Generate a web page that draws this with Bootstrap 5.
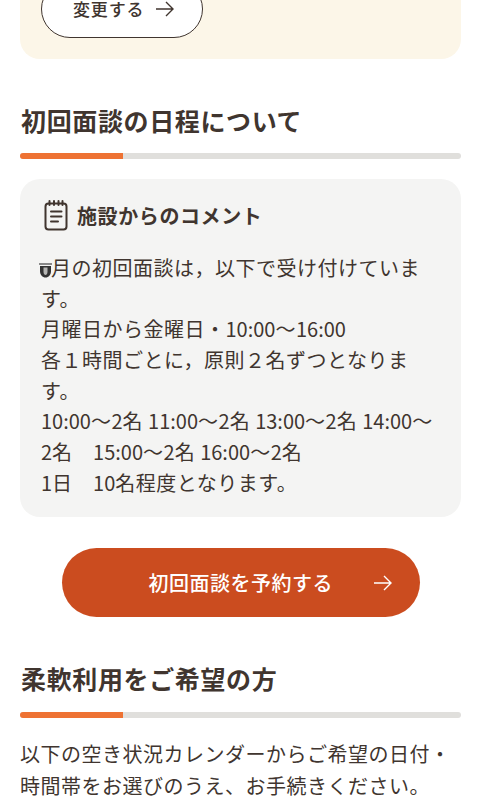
<!DOCTYPE html>
<html lang="ja">
<head>
<meta charset="utf-8">
<title>初回面談</title>
<link href="https://cdn.jsdelivr.net/npm/bootstrap@5.3.0/dist/css/bootstrap.min.css" rel="stylesheet">
<style>
html,body{height:800px;overflow:hidden;background:#fff}
body{font-family:"Noto Sans CJK JP","Noto Sans",sans-serif;color:#40352f;padding:0 20px}
.top-panel{background:#fcf6e8;border-radius:0 0 20px 20px;height:59px;padding:0 21px}
.change-btn{width:162px;height:58px;margin-top:-20px;border:1.5px solid #40352f;border-radius:29px;background:#fff;color:#40352f;font-size:17px;font-weight:500;letter-spacing:.05em;line-height:1;padding:19px 0 0 31px;white-space:nowrap}
.change-btn svg{margin-left:11px;vertical-align:-2px}
.sec-title{font-size:25px;font-weight:700;letter-spacing:.025em;line-height:36px;margin:0;padding-left:1px}
.rule-bar{height:6px;background:#e0dfdc;border-radius:3px;overflow:hidden}
.rule-fill{width:103px;height:6px;background:#ee7233}
.first-title{margin-top:43px}
.rule-gap{margin-top:15px}
.note-box{background:#f4f4f3;border-radius:20px;padding:18px 21px 18px;margin-top:20px;height:338px}
.note-head{font-size:20px;font-weight:700;line-height:34px;gap:9px;letter-spacing:.03em;padding-left:3px}
.note-head span{padding-top:2px}
.note-body{font-size:20px;letter-spacing:.5px;line-height:30.65px;margin:20px 0 0}
.num{letter-spacing:0}
.cta-btn{display:flex;align-items:center;width:358px;height:69px;margin:31px auto 0;border-radius:35px;background:#cb4c1f;color:#fff;font-size:20px;font-weight:500;letter-spacing:.5px;padding:0 27px 0 87px;border:0}
.cta-btn svg{margin-left:auto}
.second-title{margin-top:43px}
.rule-second{margin-top:16px}
.intro{font-size:20px;letter-spacing:.5px;line-height:32px;margin:20px 0 0}
.mark-glyph{display:inline-block;width:13px;height:16px;margin-left:-2px;margin-right:-1px;vertical-align:-2px}
</style>
</head>
<body>
<div class="top-panel d-flex align-items-start">
  <div class="change-btn">変更する<svg width="20" height="18" viewBox="0 0 20 18" fill="none" stroke="#40352f" stroke-width="1.4"><path d="M1 9h17M11 2l7 7-7 7"/></svg></div>
</div>
<h2 class="sec-title first-title">初回面談の日程について</h2>
<div class="rule-bar rule-gap"><div class="rule-fill"></div></div>
<div class="note-box">
  <div class="note-head d-flex align-items-center">
    <svg width="24" height="31" viewBox="0 0 24 31" fill="none" stroke="#40352f" stroke-width="2" stroke-linecap="round"><rect x="1.500" y="3.500" width="21" height="26" rx="3"/><path d="M5.500 1v4M10 1v4M14.500 1v4M18.500 1v4M7 11.500h10.500M7 16.500h10.500M7 21.500h7"/></svg>
    <span>施設からのコメント</span>
  </div>
  <p class="note-body"><svg class="mark-glyph" viewBox="0 0 13 16"><rect y="1" width="13" height="2" fill="#888"/><path d="M1 4h11v5c0 4-2.500 6.500-5.500 6.500S1 13 1 9z" fill="#333"/><path d="M4.500 5.500h4v4c0 2-.8 3.500-2 3.500s-2-1.500-2-3.500z" fill="#b5b5b3"/></svg>月の初回面談は，以下で受け付けています。<br>月曜日から金曜日・<span class="num">10:00</span>～<span class="num">16:00</span><br>各１時間ごとに，原則２名ずつとなります。<br><span class="num">10:00</span>～<span class="num">2</span>名 <span class="num">11:00</span>～<span class="num">2</span>名 <span class="num">13:00</span>～<span class="num">2</span>名 <span class="num">14:00</span>～<span class="num">2</span>名　<span class="num">15:00</span>～<span class="num">2</span>名 <span class="num">16:00</span>～<span class="num">2</span>名<br><span class="num">1</span>日　<span class="num">10</span>名程度となります。</p>
</div>
<div class="cta-btn">初回面談を予約する<svg width="20" height="18" viewBox="0 0 20 18" fill="none" stroke="#fff" stroke-width="1.400"><path d="M1 9h17M11 2l7 7-7 7"/></svg></div>
<h2 class="sec-title second-title">柔軟利用をご希望の方</h2>
<div class="rule-bar rule-second"><div class="rule-fill"></div></div>
<p class="intro">以下の空き状況カレンダーからご希望の日付・時間帯をお選びのうえ、お手続きください。</p>
<script src="https://cdn.jsdelivr.net/npm/bootstrap@5.3.0/dist/js/bootstrap.bundle.min.js"></script>
</body>
</html>
